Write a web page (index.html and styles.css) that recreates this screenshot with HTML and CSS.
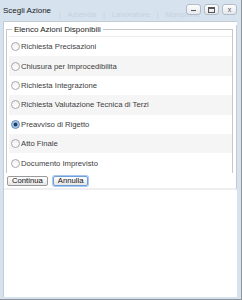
FILE: index.html
```html
<!DOCTYPE html>
<html lang="it">
  <head>
    <meta charset="UTF-8" />
    <title>Scegli Azione</title>
    <link rel="stylesheet" href="styles.css">
  </head>
  <body>
    <div class="window">
      <div class="titlebar">
        <span class="title">Scegli Azione</span>
        <span class="ghost">|&nbsp;&nbsp; Azienda &nbsp;&nbsp;|&nbsp;&nbsp; Lavoratore &nbsp;&nbsp;|&nbsp;&nbsp; Mansione</span>
        <div class="controls">
          <span class="ctl"><span class="ico-min"></span></span>
          <span class="ctl"><span class="ico-max"></span></span>
          <span class="ctl"><span class="ico-close">x</span></span>
        </div>
      </div>
      <div class="content">
        <div class="panel">
          <fieldset class="group">
            <legend>Elenco Azioni Disponibili</legend>
            <div class="list">
              <label class="row"><span class="radio"></span>Richiesta Precisazioni</label>
              <label class="row alt"><span class="radio"></span>Chiusura per Improcedibilita</label>
              <label class="row"><span class="radio"></span>Richiesta Integrazione</label>
              <label class="row alt"><span class="radio"></span>Richiesta Valutazione Tecnica di Terzi</label>
              <label class="row"><span class="radio checked"></span>Preavviso di Rigetto</label>
              <label class="row alt"><span class="radio"></span>Atto Finale</label>
              <label class="row"><span class="radio"></span>Documento Imprevisto</label>
            </div>
          </fieldset>
          <div class="actions">
            <button class="btn" type="button">Continua</button>
            <button class="btn focus" type="button">Annulla</button>
          </div>
        </div>
      </div>
    </div>
  </body>
</html>
```

FILE: styles.css
```css
html,
body {
  margin: 0;
  padding: 0;
}
body {
  width: 242px;
  height: 300px;
  background: #8d9299;
  font-family: "Liberation Sans", Arial, sans-serif;
  overflow: hidden;
}
.window {
  width: 241px;
  height: 299px;
  background: #d6e2ee;
  box-sizing: border-box;
  padding: 0 4px 2px 3px;
  display: flex;
  flex-direction: column;
}
.titlebar {
  height: 21px;
  position: relative;
  display: flex;
  align-items: center;
  flex-shrink: 0;
}
.title {
  font-size: 8px;
  color: #1a1a1a;
  position: relative;
  z-index: 1;
  margin-top: -1px;
}
.ghost {
  position: absolute;
  left: 56px;
  top: 10px;
  font-size: 8px;
  color: #c6d3df;
  white-space: nowrap;
}
.controls {
  margin-left: auto;
  display: flex;
  gap: 3px;
  margin-top: -2px;
  position: relative;
  z-index: 1;
}
.ctl {
  width: 15px;
  height: 11px;
  box-sizing: border-box;
  border: 1px solid #b3bcc6;
  border-radius: 3px;
  background: linear-gradient(#fdfdfd, #e4e8ec);
  display: flex;
  align-items: center;
  justify-content: center;
}
.ico-min {
  width: 5px;
  height: 1px;
  background: #555;
  margin-top: 2px;
}
.ico-max {
  width: 5px;
  height: 3px;
  border: 1px solid #555;
  border-top-width: 2px;
}
.ico-close {
  font-size: 7px;
  line-height: 7px;
  color: #555;
}
.content {
  flex: 1;
  background: #fff;
  border-top: 1px solid #c4ccd4;
  border-left: 1px solid #c4ccd4;
}
.panel {
  border-right: 1px solid #c9c9c9;
  border-bottom: 2px solid #efefef;
  padding: 0 2px 2px 1px;
}
.group {
  margin: 3px 1px 0 1px;
  padding: 0;
  border: 1px solid #c7c7c7;
  border-bottom: none;
  min-width: 0;
}
.group legend {
  font-size: 8px;
  color: #1a1a1a;
  padding: 0 2px;
  margin-left: 5px;
}
.list {
  border-top: 1px solid #ececec;
  margin: 2px 0 0 2px;
}
.row {
  display: flex;
  align-items: center;
  height: 19.4px;
  font-size: 7.7px;
  color: #3d3d3d;
}
.row.alt {
  background: #f5f5f5;
}
.radio {
  width: 9px;
  height: 9px;
  box-sizing: border-box;
  border-radius: 50%;
  border: 1px solid #a9a9a9;
  background: linear-gradient(#f0f0f0, #fff);
  margin: 0 1px 0 2px;
  flex-shrink: 0;
}
.radio.checked {
  border-color: #5f87b8;
  background: radial-gradient(circle, #1f3f66 0, #1f3f66 1.6px, #8fb3dc 2.2px, #cfe0f3 4px);
}
.actions {
  display: flex;
  gap: 5px;
  padding: 3px 0 0 2px;
}
.btn {
  font-family: "Liberation Sans", Arial, sans-serif;
  font-size: 7.7px;
  height: 10px;
  line-height: 8px;
  padding: 0 4px;
  border: 1px solid #9a9a9a;
  border-radius: 2px;
  background: linear-gradient(#ffffff, #e6e6e6);
  color: #111;
}
.btn.focus {
  border-color: #6f9fd8;
  box-shadow: 0 0 0 1px #a9c8ee;
}
```
